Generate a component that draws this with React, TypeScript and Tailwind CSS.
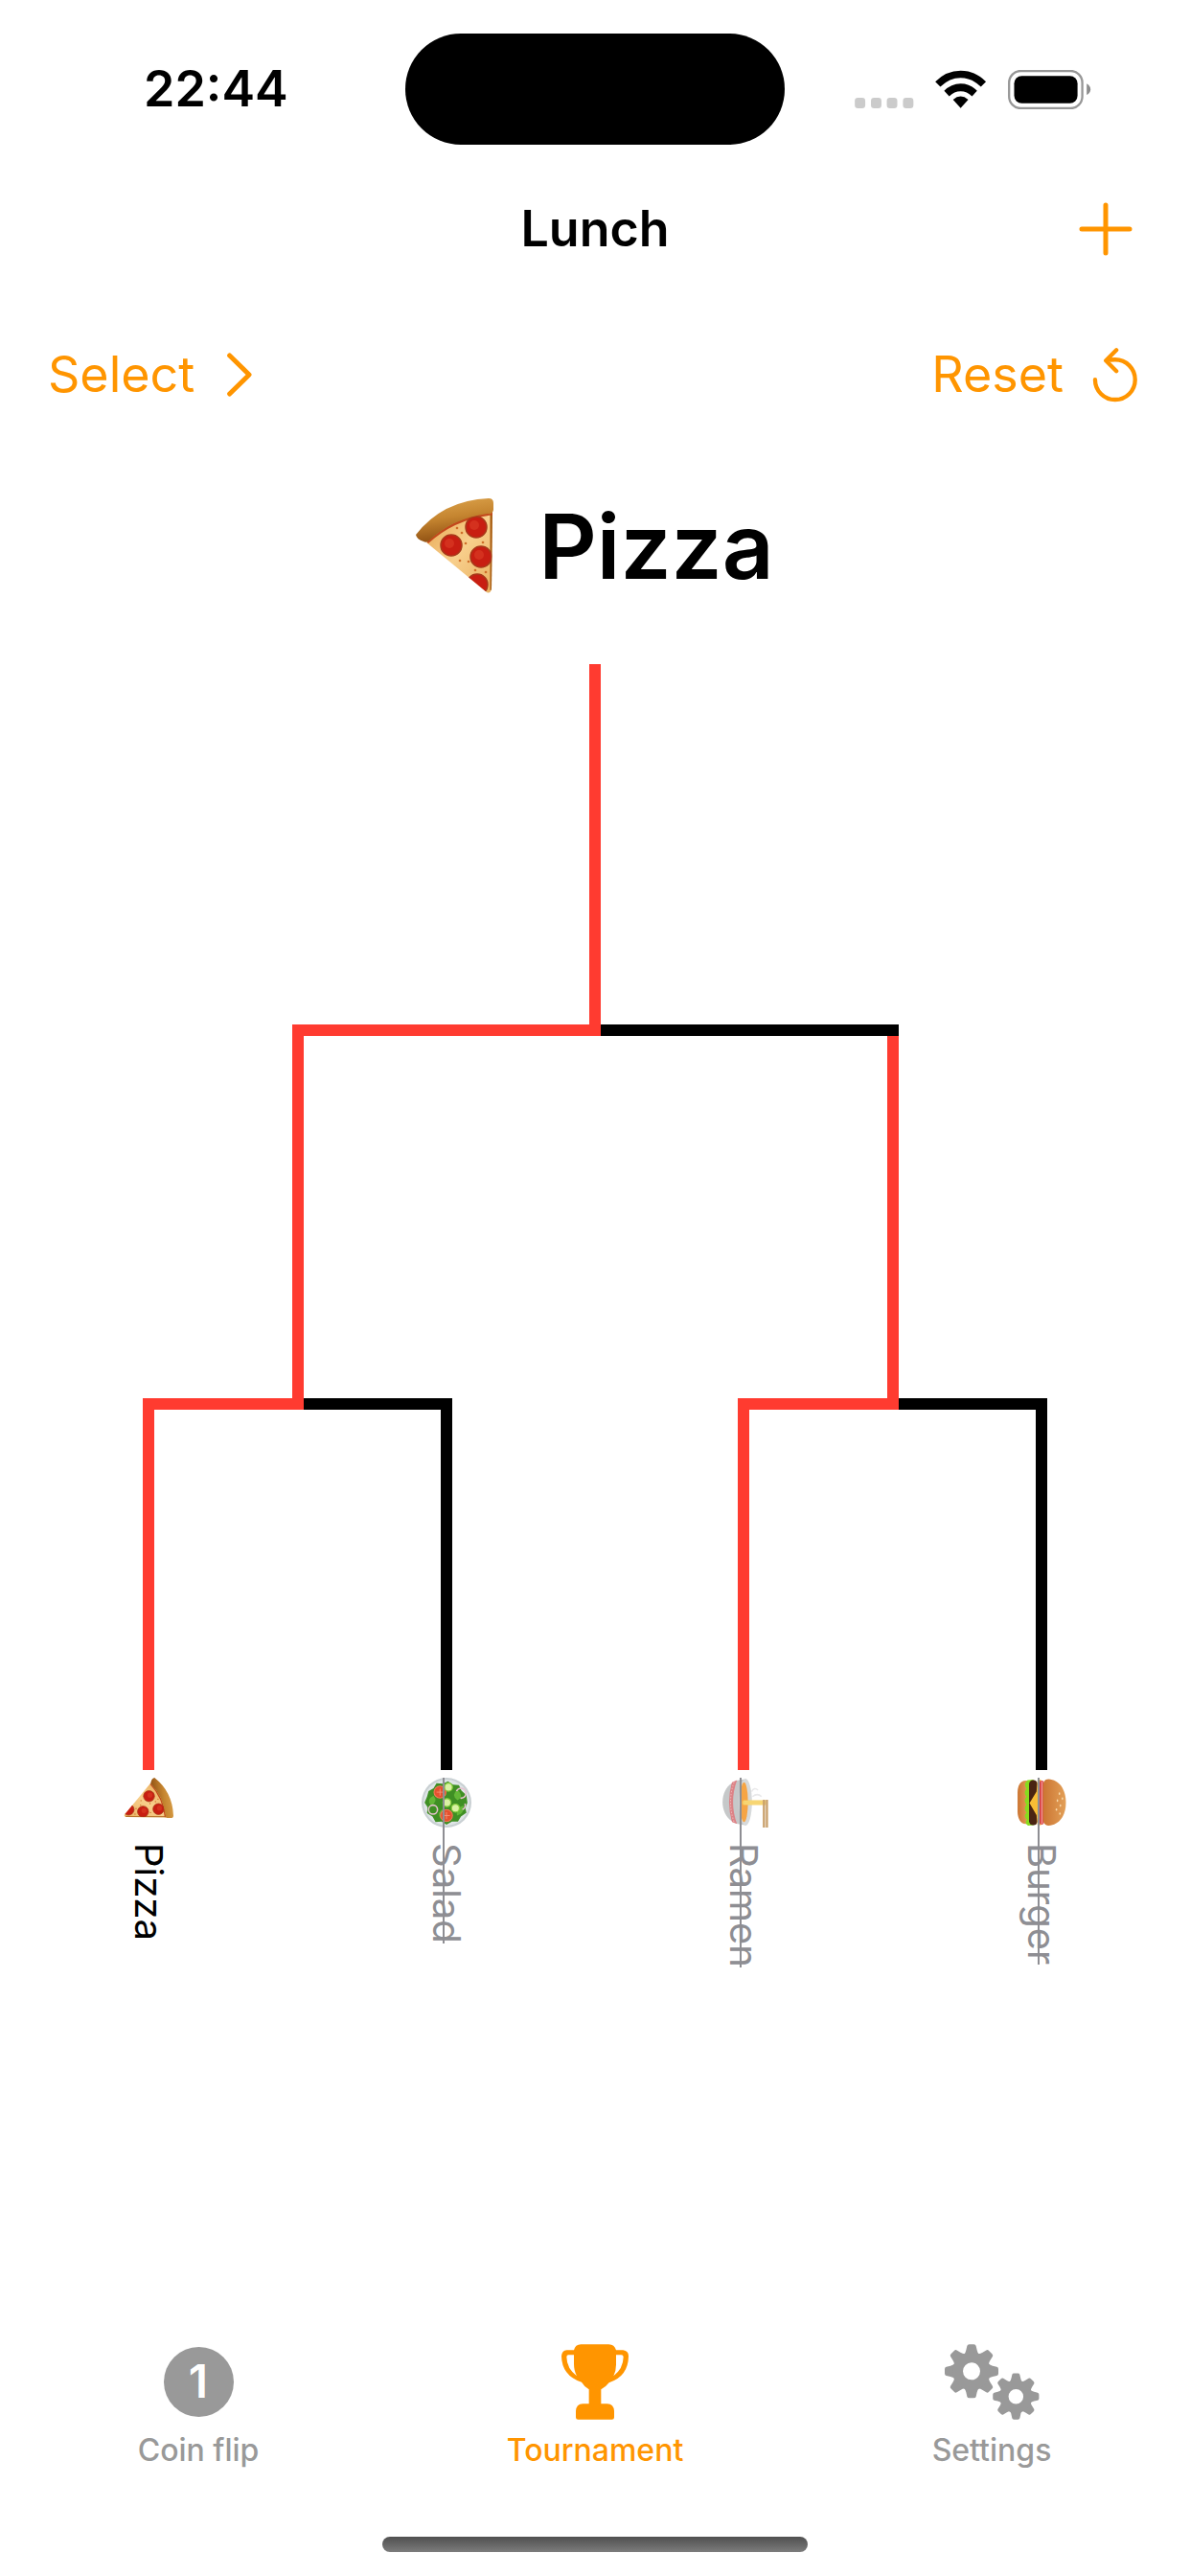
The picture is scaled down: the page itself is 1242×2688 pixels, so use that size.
import type { ReactNode } from 'react';

function PizzaEmoji({ className }: { className: string }) {
  return (
    <svg viewBox="0 0 100 100" className={className} aria-hidden="true">
      <defs>
        <linearGradient id="crust" x1="0" y1="0" x2="0.25" y2="1">
          <stop offset="0" stopColor="#e0a850" />
          <stop offset="0.5" stopColor="#c58530" />
          <stop offset="1" stopColor="#8f5012" />
        </linearGradient>
        <linearGradient id="cheese" x1="0" y1="0" x2="1" y2="1">
          <stop offset="0" stopColor="#e6a550" />
          <stop offset="0.5" stopColor="#f8cf8c" />
          <stop offset="1" stopColor="#e8b060" />
        </linearGradient>
        <clipPath id="slice">
          <path d="M11 46Q40 18 80 14L79 94Q78 100 74 98Z" />
        </clipPath>
      </defs>
      <path d="M11 46Q40 18 80 14L79 94Q78 100 74 98Z" fill="url(#cheese)" />
      <g clipPath="url(#slice)">
        <path d="M79 14V96" stroke="#a85f16" strokeWidth="3" />
        <path d="M12 46Q40 20 80 16" fill="none" stroke="#c3491c" strokeWidth="3" />
        <g fill="#c81e12" stroke="#a8391a" strokeWidth="1.5">
          <circle cx="63" cy="30" r="11" />
          <circle cx="37" cy="49" r="11" />
          <circle cx="68" cy="61" r="11" />
          <circle cx="64" cy="90" r="11" />
        </g>
        <g fill="#e0452a" opacity="0.5">
          <circle cx="61" cy="28" r="5" />
          <circle cx="35" cy="47" r="5" />
          <circle cx="66" cy="59" r="5" />
        </g>
        <g fill="#cf6f2a">
          <circle cx="48" cy="36" r="1.3" />
          <circle cx="52" cy="47" r="1.3" />
          <circle cx="55" cy="66" r="1.3" />
          <circle cx="46" cy="65" r="1.3" />
          <circle cx="70" cy="46" r="1.3" />
          <circle cx="73" cy="77" r="1.3" />
          <circle cx="62" cy="75" r="1.3" />
          <circle cx="43" cy="31" r="1.3" />
        </g>
      </g>
      <path d="M0 38Q28 2 76 0Q81 0 81 5V12Q80 17 75 16Q38 21 14 44Q11 47 8 45Q1 43 0 38Z" fill="url(#crust)" />
    </svg>
  );
}

function SaladEmoji({ className }: { className: string }) {
  return (
    <svg viewBox="0 0 100 100" className={className} aria-hidden="true">
      <circle cx="50" cy="50" r="50" fill="#c9d0d3" />
      <circle cx="50" cy="50" r="46" fill="#dfe5e7" />
      <path d="M50 8L61 12L70 10L78 21L88 27L88 39L94 50L88 60L89 72L78 78L71 89L59 88L50 94L38 89L27 86L21 76L11 70L12 57L7 47L14 37L15 25L26 20L35 10Z" fill="#3f8f24" />
      <g fill="#63b637">
        <path d="M24 28Q38 14 45 28Q35 42 24 28Z" />
        <path d="M56 16Q74 14 76 29Q60 32 56 16Z" />
        <path d="M16 52Q30 43 36 58Q25 69 16 52Z" />
        <path d="M62 56Q76 47 83 61Q70 72 62 56Z" />
        <path d="M36 76Q48 66 56 81Q44 92 36 76Z" />
      </g>
      <g fill="#e4512f" stroke="#f07a58" strokeWidth="2">
        <circle cx="29" cy="63" r="12" />
        <circle cx="76" cy="50" r="12" />
      </g>
      <g stroke="#f79a80" strokeWidth="1.5">
        <path d="M22 63H36M29 56V70M69 50H83M76 43V57" />
      </g>
      <g fill="#d9f2a3" stroke="#86cc3c" strokeWidth="2.5">
        <circle cx="19" cy="46" r="8" />
        <circle cx="50" cy="49" r="8" />
        <circle cx="61" cy="32" r="8" />
      </g>
      <g fill="none" stroke="#e6c1cf" strokeWidth="3">
        <circle cx="64" cy="77" r="9" />
        <path d="M27 30A10 10 0 1 1 41 22" />
        <path d="M52 13A9 9 0 0 1 64 18" />
      </g>
    </svg>
  );
}

function RamenEmoji({ className }: { className: string }) {
  return (
    <svg viewBox="0 0 100 100" className={className} aria-hidden="true">
      <g fill="none" stroke="#e9e9ea" strokeWidth="3">
        <path d="M28 34Q18 28 25 21" />
        <path d="M38 32Q30 22 38 14" />
      </g>
      <path d="M3 45C3 76 24 92 49 92S95 76 95 45Z" fill="#c6c8c9" />
      <path d="M5 63Q49 79 93 63L89 73Q49 85 9 73Z" fill="#dc8286" />
      <path d="M9 69Q49 83 89 69" fill="none" stroke="#efb3b4" strokeWidth="2" strokeDasharray="3 3" />
      <ellipse cx="49" cy="46" rx="47" ry="13" fill="#d7dadb" />
      <ellipse cx="49" cy="49" rx="40" ry="8" fill="#f6a545" />
      <path d="M45 5H55V50Q50 55 45 50Z" fill="#f5ce62" />
      <path d="M48 7V49M52 7V49" stroke="#fbe391" strokeWidth="1.5" />
      <path d="M44 3H100M44 9H100" stroke="#c9a06c" strokeWidth="4.5" />
    </svg>
  );
}

function BurgerEmoji({ className }: { className: string }) {
  return (
    <svg viewBox="0 0 100 100" className={className} aria-hidden="true">
      <defs>
        <linearGradient id="bun" x1="0" y1="0" x2="0" y2="1">
          <stop offset="0" stopColor="#e3a058" />
          <stop offset="1" stopColor="#cb7532" />
        </linearGradient>
      </defs>
      <path d="M6 76H93V82C93 92 82 98 68 98H30C16 98 6 92 6 82Z" fill="url(#bun)" />
      <path d="M4 66H95L96 77Q90 85 84 79Q78 87 70 80Q62 87 54 80Q46 87 38 80Q30 87 22 80Q14 87 5 78Z" fill="#86dc1e" />
      <rect x="5" y="58" width="90" height="17" rx="8" fill="#4a2412" />
      <path d="M4 51H95V58L75 60L51 74L28 60L5 58Z" fill="#f8bd35" />
      <rect x="6" y="45" width="88" height="9" rx="4" fill="#dc4a4d" />
      <path d="M7 49H93" stroke="#f39a98" strokeWidth="2" />
      <path d="M3 36C4 14 24 1 50 1S95 14 96 36C96 44 90 47 80 47H19C9 47 3 44 3 36Z" fill="url(#bun)" />
      <g fill="#f8dcae">
        <ellipse cx="42" cy="8" rx="2.5" ry="1.5" />
        <ellipse cx="56" cy="12" rx="2.5" ry="1.5" />
        <ellipse cx="32" cy="14" rx="2.5" ry="1.5" />
        <ellipse cx="64" cy="20" rx="2.5" ry="1.5" />
        <ellipse cx="46" cy="18" rx="2.5" ry="1.5" />
        <ellipse cx="72" cy="13" rx="2.5" ry="1.5" />
      </g>
    </svg>
  );
}

function StatusIcons() {
  return (
    <svg viewBox="93 94 746 124" className="h-[41px] w-[249px]" role="img" aria-label="No signal, Wi-Fi, battery full">
      <g fill="#cbcbcb">
        <rect x="93" y="182" width="33" height="33" rx="10" />
        <rect x="144" y="182" width="33" height="33" rx="10" />
        <rect x="194" y="182" width="33" height="33" rx="10" />
        <rect x="245" y="182" width="33" height="33" rx="10" />
      </g>
      <path d="M347 131Q381 96 427 96T507 131L491 147Q462 119 427 119T363 147Z" />
      <path d="M375 160Q397 137 427 137T479 160L463 177Q447 161 427 161T391 177Z" />
      <path d="M403 188Q427 167 451 188L427 214Z" />
      <rect x="580" y="97" width="231" height="118" rx="37" fill="none" stroke="#979797" strokeWidth="7" />
      <rect x="596" y="113" width="200" height="86" rx="24" />
      <path d="M825 137Q837 144 837 155T825 173Z" fill="#8c8c8c" />
    </svg>
  );
}

function TrophyIcon() {
  return (
    <svg viewBox="227 76 210 236" className="h-[79px] w-[70px]" fill="currentColor" aria-hidden="true">
      <path d="M288 76H375Q393 76 398 94H420Q437 96 437 113Q436 177 376 196Q366 209 351 217V262H370Q391 263 392 285V305Q392 312 385 312H279Q272 312 272 305V285Q273 263 294 262H313V217Q298 209 290 195Q228 174 227 113Q228 95 244 94H266Q270 76 288 76ZM266 109H249Q243 109 243 116Q244 153 275 175Q266 160 266 138ZM398 109V140Q398 160 390 175Q420 153 421 116Q421 109 414 109Z" />
    </svg>
  );
}

const toothAngles = [0, 45, 90, 135, 180, 225, 270, 315];

function Gear({ x, y, size }: { x: number; y: number; size: number }) {
  return (
    <g transform={`translate(${x} ${y}) scale(${size})`}>
      {toothAngles.map((angle) => (
        <path
          key={angle}
          d="M-24 -52Q-18 -59 -17 -66L-14 -79Q-13 -84 -7 -84H7Q13 -84 14 -79L17 -66Q18 -59 24 -52L0 -30Z"
          transform={`rotate(${angle})`}
        />
      ))}
      <circle r="43" fill="none" stroke="currentColor" strokeWidth="32" />
    </g>
  );
}

function GearsIcon() {
  return (
    <svg viewBox="72 78 297 237" className="h-[79px] w-[99px]" fill="currentColor" aria-hidden="true">
      <Gear x={156} y={163} size={1} />
      <Gear x={295} y={242} size={0.86} />
    </svg>
  );
}

function CoinIcon() {
  return (
    <span className="flex size-[73px] items-center justify-center rounded-full bg-[#999999] text-5xl font-semibold text-white">
      1
    </span>
  );
}

type Match = { height: string; split?: [Match, Match]; won: boolean };

const leaf = (won: boolean): Match => ({ height: 'h-[376px]', won });

const bracket: Match = {
  height: 'h-[376px]',
  won: true,
  split: [
    { height: 'h-[378px]', won: true, split: [leaf(true), leaf(false)] },
    { height: 'h-[378px]', won: true, split: [leaf(true), leaf(false)] },
  ],
};

function Branch({ match }: { match: Match }) {
  return (
    <div>
      <div className={`mx-auto w-3 ${match.height} ${match.won ? 'bg-[#ff3b30]' : 'bg-black'}`} />
      {match.split && (
        <>
          <div className="flex h-3 px-[calc(25%-6px)]">
            <div className="w-[calc(50%+6px)] bg-[#ff3b30]" />
            <div className="w-[calc(50%-6px)] bg-black" />
          </div>
          <div className="grid grid-cols-2">
            <Branch match={match.split[0]} />
            <Branch match={match.split[1]} />
          </div>
        </>
      )}
    </div>
  );
}

const entries = [
  { name: 'Pizza', Emoji: PizzaEmoji, out: false },
  { name: 'Salad', Emoji: SaladEmoji, out: true },
  { name: 'Ramen', Emoji: RamenEmoji, out: true },
  { name: 'Burger', Emoji: BurgerEmoji, out: true },
];

function Tab({ label, active, children }: { label: string; active?: boolean; children: ReactNode }) {
  return (
    <button
      type="button"
      aria-current={active ? 'page' : undefined}
      className={`flex flex-col items-center gap-3 ${active ? 'text-[#ff9500]' : 'text-[#999999]'}`}
    >
      <span className="flex h-20 items-center">{children}</span>
      <span className="text-[32px] leading-10 font-medium">{label}</span>
    </button>
  );
}

export default function App() {
  return (
    <div className="flex min-h-screen flex-col bg-white font-['Inter',sans-serif] text-black">
      <div className="grid h-[186px] grid-cols-[1fr_396px_1fr] items-center">
        <span className="pl-[150px] text-[52px] font-semibold">22:44</span>
        <div className="h-[116px] rounded-full bg-black" />
        <div className="flex justify-end pr-[102px]">
          <StatusIcons />
        </div>
      </div>

      <header className="grid h-[106px] grid-cols-[1fr_auto_1fr] items-center px-[60px]">
        <h1 className="col-start-2 text-[52px] font-semibold">Lunch</h1>
        <button type="button" aria-label="Add" className="justify-self-end text-[#ff9500]">
          <svg viewBox="0 0 56 56" className="size-14" fill="none" stroke="currentColor" strokeWidth="5" strokeLinecap="round">
            <path d="M28 3V53M3 28H53" />
          </svg>
        </button>
      </header>

      <div className="flex h-[198px] items-center justify-between pr-[54px] pl-[50px] text-[52px] text-[#ff9500]">
        <button type="button" className="flex items-center gap-[34px]">
          Select
          <svg viewBox="623 86 79 138" className="h-[46px] w-[26px]" fill="none" stroke="currentColor" strokeWidth="15" strokeLinecap="round" strokeLinejoin="round">
            <path d="M631 94L693 155L631 216" />
          </svg>
        </button>
        <button type="button" className="flex items-center gap-[30px]">
          Reset
          <svg viewBox="538 68 143 172" className="h-[57px] w-[48px]" fill="none" stroke="currentColor" strokeWidth="13" strokeLinecap="round" strokeLinejoin="round">
            <path d="M546 168A63 63 0 1 0 609 105Q594 105 580 108M613 75L580 108L613 141" />
          </svg>
        </button>
      </div>

      <main className="flex-1">
        <div className="flex h-40 items-center justify-center gap-7">
          <PizzaEmoji className="size-[100px]" />
          <h2 className="text-[94px] leading-none font-semibold">Pizza</h2>
        </div>
        <div className="mt-[43px]">
          <Branch match={bracket} />
        </div>
        <ul className="mt-2 grid grid-cols-4">
          {entries.map(({ name, Emoji, out }) => (
            <li key={name} className="flex items-start justify-center">
              <div className={`relative flex flex-col items-center gap-4 ${out ? 'text-[#8e8e93]' : ''}`}>
                <Emoji className="size-[52px] rotate-90" />
                <span className="text-[40px] leading-[52px] [writing-mode:vertical-rl]">{name}</span>
                {out && <span className="absolute inset-y-0 left-[22px] w-[2px] bg-[#8e8e93]" />}
              </div>
            </li>
          ))}
        </ul>
      </main>

      <nav className="grid grid-cols-3">
        <Tab label="Coin flip">
          <CoinIcon />
        </Tab>
        <Tab label="Tournament" active>
          <TrophyIcon />
        </Tab>
        <Tab label="Settings">
          <GearsIcon />
        </Tab>
      </nav>
      <div className="mx-auto mt-[70px] mb-[25px] h-4 w-[444px] rounded-full bg-linear-to-b from-[#505050] to-[#7c7c7c]" />
    </div>
  );
}
